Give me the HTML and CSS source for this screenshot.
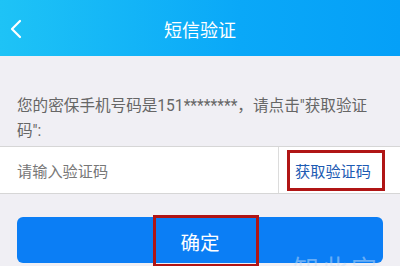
FILE: index.html
```html
<!DOCTYPE html>
<html lang="zh">
    <head>
        <meta charset="utf-8" />
        <title>短信验证</title>
        <link rel="stylesheet" href="styles.css">
    </head>

    <body>
        <div class="header">
            <svg class="back" width="14" height="20" viewBox="0 0 14 20">
                <polyline points="11,2 3,10 11,18" fill="none" stroke="#fff" stroke-width="2.2" stroke-linecap="round" stroke-linejoin="round"/>
            </svg>
            <div class="title">短信验证</div>
        </div>

        <div class="info">您的密保手机号码是151********，请点击"获取验证码":</div>

        <div class="code-row">
            <div class="code-input">请输入验证码</div>
            <div class="code-get">
                <span class="mark mark-get">获取验证码</span>
            </div>
        </div>

        <div class="confirm-wrap">
            <div class="confirm">
                <span class="mark mark-ok">确定</span>
            </div>
        </div>

        <div class="watermark">知此宝</div>
    </body>
</html>
```

FILE: styles.css
```css
html, body {
    margin: 0;
    padding: 0;
    width: 400px;
    height: 266px;
    overflow: hidden;
}
body {
    font-family: Roboto, "Noto Sans CJK SC", sans-serif;
    background: #f0eff4;
    position: relative;
}
.header {
    height: 56px;
    background: linear-gradient(90deg, #1ec3f6, #0aa8f8 60%, #05a0f8);
    display: flex;
    align-items: center;
    justify-content: center;
    position: relative;
}
.back {
    position: absolute;
    left: 9px;
    top: 19px;
}
.title {
    color: #fff;
    font-size: 18px;
    margin-top: 2px;
}
.info {
    padding: 38px 17px 2px 17px;
    font-size: 15.6px;
    line-height: 25px;
    color: #666;
}
.code-row {
    display: flex;
    height: 48px;
    background: #fff;
    border-top: 1px solid #d6d6d6;
    border-bottom: 1px solid #d6d6d6;
    box-sizing: border-box;
}
.code-input {
    flex: 1;
    display: flex;
    align-items: center;
    padding-left: 17px;
    font-size: 15.2px;
    color: #777;
}
.code-get {
    width: 122px;
    border-left: 1px solid #dcdcdc;
    display: flex;
    align-items: center;
    padding-left: 8px;
    box-sizing: border-box;
}
.mark {
    border: 3.5px solid #b01515;
    box-sizing: border-box;
    display: flex;
    align-items: center;
}
.mark-get {
    width: 98px;
    height: 41px;
    padding-left: 5px;
    font-size: 15.2px;
    color: #1d5bb3;
}
.confirm-wrap {
    padding: 23px 17px 0 17px;
}
.confirm {
    height: 46px;
    background: #0b7ef5;
    border-radius: 6px;
    display: flex;
    align-items: center;
    justify-content: center;
}
.mark-ok {
    width: 106px;
    height: 52px;
    margin-top: 2px;
    margin-left: 12px;
    padding-right: 12px;
    justify-content: center;
    font-size: 19.5px;
    color: #fff;
}
.watermark {
    position: absolute;
    left: 293px;
    top: 249px;
    font-size: 26px;
    letter-spacing: 3px;
    color: rgba(200, 222, 245, 0.5);
}
```
